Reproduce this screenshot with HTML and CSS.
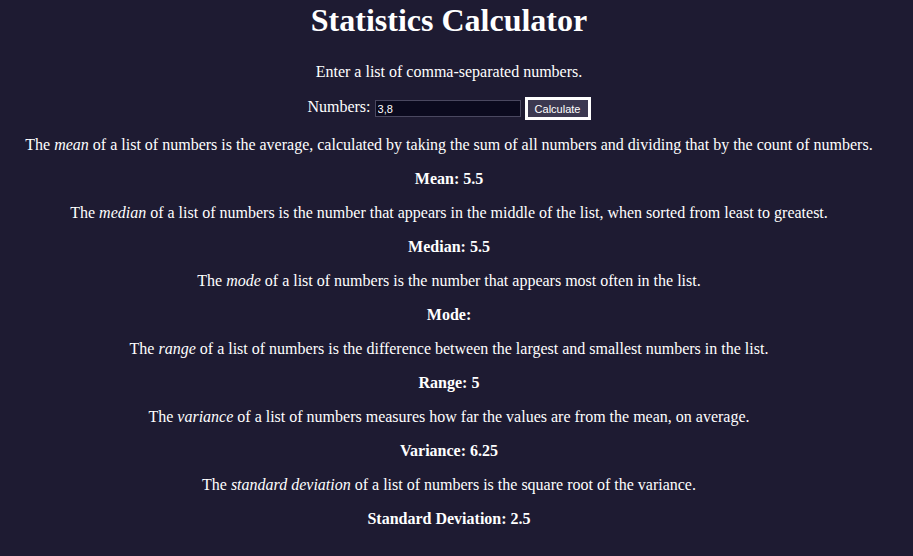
FILE: index.html
```html
<!DOCTYPE html>
<html>
<head>
<meta charset="utf-8">
<link rel="stylesheet" href="styles.css">
</head>
<body>
<h1 class="title">Statistics Calculator</h1>
<p>Enter a list of comma-separated numbers.</p>
<p class="form-row"><label for="nums">Numbers:</label> <input id="nums" class="nums" type="text" value="3,8"> <button class="calc">Calculate</button></p>
<p>The <em>mean</em> of a list of numbers is the average, calculated by taking the sum of all numbers and dividing that by the count of numbers.</p>
<p class="result">Mean: 5.5</p>
<p>The <em>median</em> of a list of numbers is the number that appears in the middle of the list, when sorted from least to greatest.</p>
<p class="result">Median: 5.5</p>
<p>The <em>mode</em> of a list of numbers is the number that appears most often in the list.</p>
<p class="result">Mode: </p>
<p>The <em>range</em> of a list of numbers is the difference between the largest and smallest numbers in the list.</p>
<p class="result">Range: 5</p>
<p>The <em>variance</em> of a list of numbers measures how far the values are from the mean, on average.</p>
<p class="result">Variance: 6.25</p>
<p>The <em>standard deviation</em> of a list of numbers is the square root of the variance.</p>
<p class="result">Standard Deviation: 2.5</p>
</body>
</html>
```
FILE: styles.css
```css
html, body {
  background: #1e1b32;
}
body {
  margin: 0;
  padding: 2px 15px 0 0;
  color: #ffffff;
  font-family: "Liberation Serif", "Times New Roman", serif;
  font-size: 16px;
  text-align: center;
}
.title {
  font-size: 32px;
  margin: 0 0 24px;
}
.result {
  font-weight: bold;
}
.nums {
  box-sizing: border-box;
  width: 146px;
  height: 17px;
  padding: 0 2px;
  margin: 0;
  background: #0b0a1e;
  color: #ffffff;
  border: 1px solid #4a4860;
  font-family: "Liberation Sans", Arial, sans-serif;
  font-size: 11px;
  vertical-align: middle;
}
.calc {
  box-sizing: border-box;
  height: 23px;
  width: 66px;
  margin: 0;
  background: #3b3850;
  color: #ffffff;
  border: 3px solid #ffffff;
  font-family: "Liberation Sans", Arial, sans-serif;
  font-size: 11px;
  padding: 0;
  vertical-align: middle;
}
```
